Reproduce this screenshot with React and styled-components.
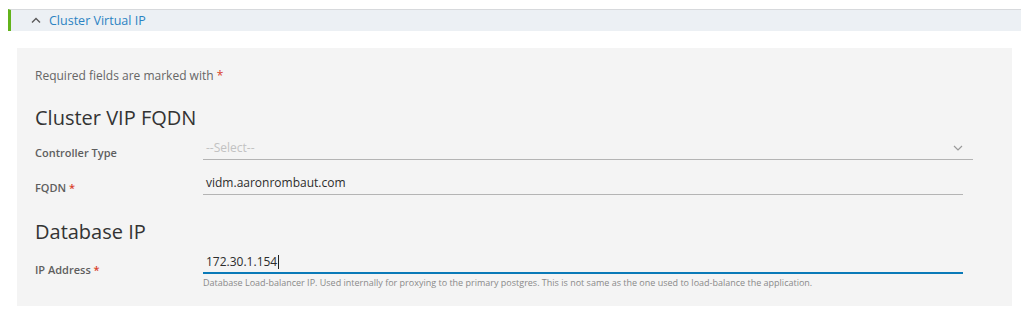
import React from 'react';
import styled, { createGlobalStyle } from 'styled-components';

const GlobalStyle = createGlobalStyle`
    html, body {
        margin: 0;
        padding: 0;
        background: #ffffff;
        font-family: "Open Sans", "Liberation Sans", sans-serif;
    }
`;

const Page = styled.div`
    width: 1024px;
    height: 319px;
    padding: 9px 3px 0 8px;
    box-sizing: border-box;
`;

const StackHeader = styled.div`
    display: flex;
    align-items: center;
    gap: 8px;
    height: 21px;
    padding-left: 20px;
    background: #ecf0f4;
    border-top: 1px solid #d7d9dc;
    border-left: 3px solid #62b31b;
`;

const StackTitle = styled.span`
    font-size: 12.5px;
    color: #2b83c3;
`;

const Panel = styled.div`
    margin: 17px 0 0 9px;
    width: 995px;
    padding: 20px 18px 17px;
    box-sizing: border-box;
    background: #f4f4f4;
`;

const Note = styled.div`
    font-size: 12px;
    line-height: 16px;
    color: #666666;
`;

const Req = styled.span`
    color: #d9412b;
`;

const SectionTitle = styled.h2`
    margin: ${p => p.$top}px 0 6px;
    font-size: 20px;
    line-height: 24px;
    font-weight: 400;
    color: #333333;
`;

const Row = styled.div`
    display: grid;
    grid-template-columns: 168px 1fr;
    margin-top: ${p => p.$top || 0}px;
`;

const Label = styled.div`
    height: ${p => p.$h || 24}px;
    display: flex;
    align-items: flex-end;
    box-sizing: border-box;
    font-size: 11px;
    line-height: 14px;
    font-weight: 600;
    color: #5e5e5e;
`;

const Control = styled.div`
    display: flex;
    flex-direction: column;
`;

const Field = styled.div`
    display: flex;
    align-items: center;
    justify-content: space-between;
    width: ${p => p.$w}px;
    height: 24px;
    box-sizing: border-box;
    padding: 0 10px 0 3px;
    border-bottom: ${p => (p.$active ? '2px solid #0a7ab8' : '1px solid #b4b4b4')};
    font-size: 12px;
    color: ${p => (p.$placeholder ? '#c2c2c2' : '#2c2c2c')};
`;

const Caret = styled.span`
    display: inline-block;
    width: 1px;
    height: 14px;
    margin-left: 1px;
    background: #222;
    vertical-align: middle;
`;

const Helper = styled.div`
    margin-top: 3px;
    font-size: 9px;
    line-height: 12px;
    color: #8a8a8a;
`;

const ChevronUp = () => (
    <svg width="10" height="7" viewBox="0 0 10 7">
        <path d="M1 5.5 L5 1.5 L9 5.5" fill="none" stroke="#5a5a5a" strokeWidth="1.4" />
    </svg>
);

const ChevronDown = () => (
    <svg width="10" height="6" viewBox="0 0 10 6">
        <path d="M1 1 L5 5 L9 1" fill="none" stroke="#9a9a9a" strokeWidth="1.2" />
    </svg>
);

const App = () => {
    return <Page>
        <GlobalStyle />
        <StackHeader>
            <ChevronUp />
            <StackTitle>Cluster Virtual IP</StackTitle>
        </StackHeader>
        <Panel>
            <Note>Required fields are marked with <Req>*</Req></Note>

            <SectionTitle $top={22}>Cluster VIP FQDN</SectionTitle>
            <Row>
                <Label>Controller Type</Label>
                <Control>
                    <Field $w={770} $placeholder>
                        <span>--Select--</span>
                        <ChevronDown />
                    </Field>
                </Control>
            </Row>
            <Row $top={11}>
                <Label>FQDN <Req>&nbsp;*</Req></Label>
                <Control>
                    <Field $w={760}>vidm.aaronrombaut.com</Field>
                </Control>
            </Row>

            <SectionTitle $top={25}>Database IP</SectionTitle>
            <Row>
                <Label $h={27}>IP Address <Req>&nbsp;*</Req></Label>
                <Control>
                    <Field $w={760} $active>
                        <span>172.30.1.154<Caret /></span>
                    </Field>
                    <Helper>Database Load-balancer IP. Used internally for proxying to the primary postgres. This is not same as the one used to load-balance the application.</Helper>
                </Control>
            </Row>
        </Panel>
    </Page>
}

export default App;
